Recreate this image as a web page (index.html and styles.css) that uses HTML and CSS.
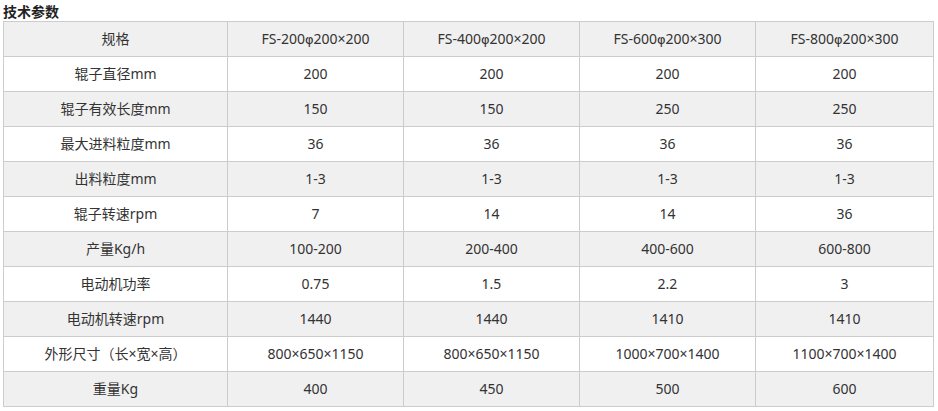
FILE: index.html
```html
<!DOCTYPE html>
<html lang="zh-CN">
<head>
<meta charset="utf-8">
<title>技术参数</title>
<link rel="stylesheet" href="styles.css">
</head>
<body>
<div class="page">
  <h3 class="title">技术参数</h3>
  <table class="spec">
    <colgroup>
      <col class="c0"><col class="c1"><col class="c1"><col class="c1"><col class="c4">
    </colgroup>
    <tbody>
      <tr><td>规格</td><td>FS-200<span class="phi">φ</span>200×200</td><td>FS-400<span class="phi">φ</span>200×200</td><td>FS-600<span class="phi">φ</span>200×300</td><td>FS-800<span class="phi">φ</span>200×300</td></tr>
      <tr><td>辊子直径mm</td><td>200</td><td>200</td><td>200</td><td>200</td></tr>
      <tr><td>辊子有效长度mm</td><td>150</td><td>150</td><td>250</td><td>250</td></tr>
      <tr><td>最大进料粒度mm</td><td>36</td><td>36</td><td>36</td><td>36</td></tr>
      <tr><td>出料粒度mm</td><td>1-3</td><td>1-3</td><td>1-3</td><td>1-3</td></tr>
      <tr><td>辊子转速rpm</td><td>7</td><td>14</td><td>14</td><td>36</td></tr>
      <tr><td>产量Kg/h</td><td>100-200</td><td>200-400</td><td>400-600</td><td>600-800</td></tr>
      <tr><td>电动机功率</td><td>0.75</td><td>1.5</td><td>2.2</td><td>3</td></tr>
      <tr><td>电动机转速rpm</td><td>1440</td><td>1440</td><td>1410</td><td>1410</td></tr>
      <tr><td>外形尺寸（长×宽×高）</td><td>800×650×1150</td><td>800×650×1150</td><td>1000×700×1400</td><td>1100×700×1400</td></tr>
      <tr><td>重量Kg</td><td>400</td><td>450</td><td>500</td><td>600</td></tr>
    </tbody>
  </table>
</div>
</body>
</html>
```

FILE: styles.css
```css
html, body {
  margin: 0;
  padding: 0;
  background: #ffffff;
}
.page {
  padding: 3px 0 0 3px;
  font-family: "Noto Sans", "Noto Sans CJK SC", sans-serif;
  color: #333333;
}
.title {
  margin: 0;
  height: 18px;
  line-height: 16px;
  font-size: 14px;
  font-weight: bold;
  color: #222222;
  font-family: "Noto Sans CJK SC", sans-serif;
}
.spec {
  border-collapse: collapse;
  table-layout: fixed;
  width: 930px;
  font-size: 14px;
}
.c0 { width: 224px; }
.c1 { width: 176px; }
.c4 { width: 178px; }
.spec td {
  border: 1px solid #cccccc;
  height: 34px;
  padding: 0;
  text-align: center;
  vertical-align: middle;
  line-height: 20px;
}
.phi {
  font-family: "DejaVu Sans", sans-serif;
  font-size: 13px;
}
.spec tr:nth-child(odd) td {
  background: #f0f0f0;
}
.spec tr:nth-child(even) td {
  background: #ffffff;
}
```
